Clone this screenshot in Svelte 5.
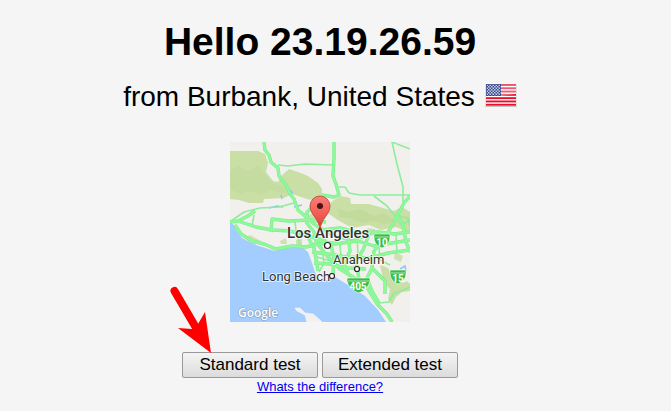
<script>
  const ip = '23.19.26.59';
  const place = 'Burbank, United States';

  const stripes = [0, 1, 2, 3, 4, 5, 6];

  const thick = [
    'M34 0 L35 8 L39 13 L41 20 L48 26 L49 34 L56 43 L60 52 L64 57 L68 68 L75 74 L84 82 L92 88',
    'M104 0 L104 16 L103 34 L106 42 L109 53 L104 55 L92 53',
    'M0 80 L8 79 L26 85 L42 88 L60 89 L78 94 L96 99',
    'M41 90 L42 77 L58 79 L80 78 L96 80',
    'M8 79 L18 74 L25 69',
    'M5 83 L11 92 L22 99 L34 102 L46 107 L62 104 L76 105 L88 102 L108 101',
    'M75 88 L80 99 L84 106 L86 117 L88 129',
    'M76 80 L84 90 L86 100 L98 115 L110 127 L126 137 L138 147 L147 162 L157 172 L162 180',
    'M92 88 L110 86 L130 91 L148 90 L164 92 L180 90',
    'M86 98 L104 102 L128 99 L144 104 L162 101 L180 98',
    'M82 110 L98 112 L116 115 L140 116 L158 111 L180 108',
    'M84 121 L100 122 L118 126 L136 127',
    'M101 103 L104 116 L103 132',
    'M118 92 L120 109 L114 121 L119 134',
    'M140 90 L133 108 L126 119 L129 137',
    'M180 54 L174 61 L167 74 L173 83 L176 100 L180 110',
    'M167 75 L156 94 L144 109 L142 126 L155 139 L155 152',
    'M142 126 L137 136 L142 149 L149 161',
    'M77 77 L77 70 L84 64 L91 60'
  ];
  const thin = [
    'M48 23 L58 24 L75 22 L103 23',
    'M162 0 L167 22 L173 45 L173 60',
    'M162 0 L180 7',
    'M109 45 L115 45 L119 51 L130 53 L180 53',
    'M144 54 L157 64 L166 75',
    'M1 79 L14 70 L30 66 L49 65 L64 61',
    'M22 84 L24 73',
    'M149 161 L159 160 L164 151 L171 149 L180 145',
    'M169 74 L178 76 L180 84',
    'M92 105 L94 121 L89 130',
    'M110 103 L112 126',
    'M127 92 L128 115',
    'M84 114 L97 118 L110 120',
    'M149 104 L150 118 L160 123',
    'M166 92 L167 111',
    'M173 83 L180 77',
    'M89 83 L102 94 L117 98 L134 96',
    'M65 79 L66 89 L70 103'
  ];
</script>

<main>
  <h1>Hello {ip}</h1>
  <p class="place">
    <span>from {place}</span>
    <svg class="flag" viewBox="0 0 32 25" role="img" aria-label="United States flag">
      <defs>
        <pattern id="stars" width="3" height="3" patternUnits="userSpaceOnUse">
          <rect width="3" height="3" fill="#35478c" />
          <path d="M0 0h1.5v1.5h1.5v1.5h-1.5v-1.5h-1.5z" fill="#c6cde5" />
        </pattern>
        <linearGradient id="gloss" x2="0" y2="1">
          <stop offset="0" stop-color="#fff" stop-opacity=".28" />
          <stop offset="1" stop-color="#fff" stop-opacity=".38" />
        </linearGradient>
      </defs>
      <rect x="0" y="1" width="32" height="23" rx="1" fill="#c4c4c4" />
      <rect x="0.5" y="0.500" width="31" height="22.500" fill="#fff" />
      {#each stripes as n}
        <rect x="1" y={1 + n * 3.3} width="30" height="1.9" fill="#e4102c" />
      {/each}
      <rect x="1" y="1" width="15" height="12" fill="#253a83" />
      <rect x="1.5" y="1.5" width="14" height="11" fill="url(#stars)" />
      <path d="M16 1h15v10L16 13z" fill="url(#gloss)" />
    </svg>
  </p>

  <svg class="map" viewBox="0 0 180 180" role="img" aria-label="Map of Los Angeles">
    <rect width="180" height="180" fill="#f1f0ed" />
    <path d="M0 9 L28 9 L35 12 L38 21 L36 30 L43 39 L48 40 L51 34 L59 27 L68 30 L78 34 L88 41 L92 47 L92 55 L80 58 L62 52 L54 56 L34 57 L33 61 L19 61 L9 58 L0 57 Z" fill="#c9dfa6" />
    <path d="M0 29 L8 24 L17 29 L29 24 L34 32 L44 42 L57 46 L53 51 L41 48 L31 53 L20 49 L10 52 L0 47 Z" fill="#bfd899" opacity=".4" />
    <path d="M104 58 L111 54 L120 56 L121 62 L139 62 L153 66 L164 69 L172 65 L180 70 L180 91 L166 85 L151 88 L139 83 L122 86 L106 77 L95 69 L97 64 Z" fill="#c9dfa6" />
    <path d="M107 66 L118 70 L130 67 L144 74 L154 71 L166 79 L155 82 L142 79 L131 81 L121 76 L110 75 Z" fill="#bcd891" opacity=".5" />
    <path d="M77 74 L83 71 L89 73 L87 79 L80 80 Z M50 99 L56 96 L57 102 L51 102 Z M66 98 L72 97 L72 103 L66 103 Z M15 95 L20 93 L31 99 L25 103 Z" fill="#cfe1b2" />
    <path d="M150 123 L158 126 L161 132 L173 141 L177 139 L180 142 L180 149 L172 150 L166 155 L162 163 L158 157 L160 147 L154 141 Z" fill="#c9dfa6" />
    <path d="M137 86 L145 87 L145 94 L139 93 Z M165 110 L173 114 L171 120 L164 117 Z" fill="#cfe1b2" />
    <path d="M0 80 L4 83 L6 88 L12 96 L26 103 L45 109 L55 106 L72 105 L78 110 L82 121 L85 130 L90 138 L98 138 L105 135 L118 143 L135 154 L148 168 L156 180 L0 180 Z" fill="#a3ccff" />
    <path d="M65 166 L70 166 L75 171 L83 172 L90 178 L92 180 L77 180 L75 173 L67 169 Z" fill="#f1f0ed" stroke="#fff" stroke-width=".5" />
    <path d="M39 66 L47 64 L53 65 M51 53 L52 57 M60 48 L63 51 M64 65 L72 63 M170 127 L175 124 L176 129" fill="none" stroke="#94c3f3" stroke-width="1.5" />
    <g class="thin">
      {#each thin as d}<path {d} />{/each}
    </g>
    <g class="road-edge">
      {#each thick as d}<path {d} />{/each}
    </g>
    <g class="road">
      {#each thick as d}<path {d} />{/each}
    </g>

    <g class="shields">
      <path d="M144 92h16v3q0 8-8 11q-8-3-8-11z" />
      <path d="M160 128h16v3q0 8-8 11q-8-3-8-11z" />
      <path d="M117 136h23v3q-2 9-11.500 12q-9.500-3-11.500-12z" />
      <path d="M145 95h14M161 131h14M118 139h21" />
      <text x="152" y="104">10</text>
      <text x="168" y="140">15</text>
      <text x="128" y="148">405</text>
    </g>

    <path d="M90 88 C89 76 80 73 80 64 A10 10 0 0 1 100 64 C100 73 91 76 90 88Z" fill="url(#pin)" stroke="#b8423b" stroke-width=".8" stroke-linejoin="round" />
    <circle cx="90" cy="64" r="3" fill="#471511" />
    <defs>
      <linearGradient id="pin" x2="0" y2="1">
        <stop offset="0" stop-color="#fb7f78" />
        <stop offset="1" stop-color="#ea3d36" />
      </linearGradient>
    </defs>

    <g class="labels">
      <text class="city" x="57" y="96">Los Angeles</text>
      <text x="103" y="122">Anaheim</text>
      <text x="32" y="139">Long Beach</text>
      <circle cx="97.500" cy="103.500" r="3" />
      <circle cx="127" cy="127" r="2.500" />
      <circle cx="102" cy="134" r="2.500" />
    </g>
    <path d="M88.500 80L90 89L91.500 80Z" fill="#ea3d36" />
    <text class="brand" x="8" y="175">Google</text>
  </svg>

  <div class="actions">
    <button type="button">Standard test</button>
    <button type="button">Extended test</button>
    <svg class="arrow" viewBox="0 0 44 70" aria-hidden="true">
      <path d="M7.500 8 L28 43" stroke="#f00" stroke-width="8" stroke-linecap="round" />
      <path d="M44 70 L11 45 L25 46 L31 41 L38 29 Z" fill="#f00" />
    </svg>
  </div>
  <a href="#difference">Whats the difference?</a>
</main>

<style>
  :global(body) {
    background: #f5f5f5;
  }
  main {
    display: flex;
    flex-direction: column;
    align-items: center;
    padding: 20px 31px 16px 0;
    color: #000;
    font-family: "Liberation Sans", Arial, sans-serif;
  }
  h1 {
    margin: 0;
    font-size: 39px;
    line-height: 44px;
  }
  .place {
    display: flex;
    align-items: flex-start;
    gap: 10px;
    margin: 16px 0 0;
    font-size: 28px;
    line-height: 34px;
  }
  .flag {
    width: 32px;
    height: 25px;
    margin-top: 3px;
  }
  .map {
    width: 180px;
    height: 180px;
    margin: 28px 0 30px;
  }
  .thin,
  .road,
  .road-edge {
    fill: none;
    stroke-linejoin: round;
  }
  .thin {
    stroke: #8cee9a;
    stroke-width: 1.6;
  }
  .road-edge {
    stroke: #80e78e;
    stroke-width: 3.4;
  }
  .road {
    stroke: #8cfa99;
    stroke-width: 2.4;
  }
  .labels text {
    font: 13px Roboto, sans-serif;
    fill: #333;
    stroke: #fff;
    stroke-width: 2px;
    stroke-opacity: 0.7;
    stroke-linejoin: round;
    paint-order: stroke;
  }
  .labels .city {
    font-size: 15px;
    font-weight: 500;
  }
  .labels circle {
    fill: #fff;
    stroke: #222;
    stroke-width: 1.2;
  }
  .shields path {
    fill: #3abf45;
    stroke: #fff;
    stroke-width: 0.6;
  }
  .shields text {
    font: bold 10px Roboto, sans-serif;
    fill: #fff;
    text-anchor: middle;
  }
  .brand {
    font: 600 12px "Open Sans", sans-serif;
    fill: #fff;
    stroke: #8096ad;
    stroke-width: 1px;
    paint-order: stroke;
  }
  .actions {
    position: relative;
    display: flex;
    gap: 4px;
  }
  button {
    width: 136px;
    height: 26px;
    padding: 0;
    border: 1px solid #999;
    border-radius: 2px;
    background: linear-gradient(#f4f4f4, #dcdcdc);
    color: #000;
    font: 17px/20px "Liberation Sans", Arial, sans-serif;
  }
  .arrow {
    position: absolute;
    left: -15px;
    bottom: 25px;
    width: 44px;
    height: 70px;
    pointer-events: none;
  }
  a {
    color: #00e;
    font-size: 13px;
    line-height: 18px;
  }
</style>
